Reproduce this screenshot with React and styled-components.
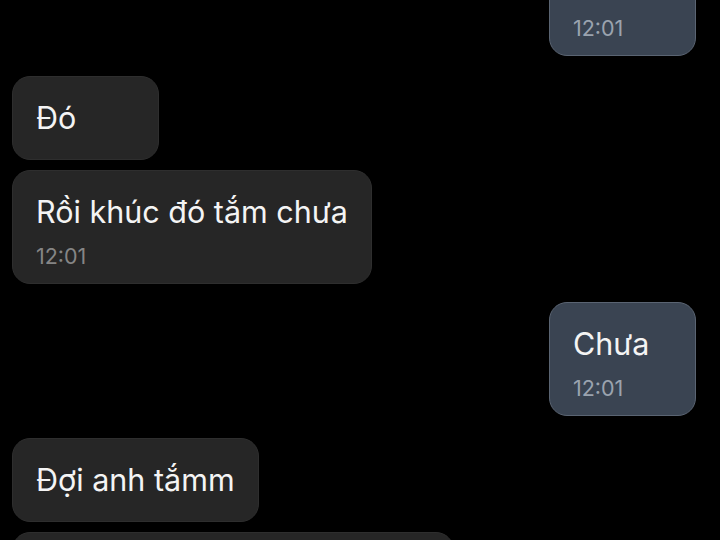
import styled, { createGlobalStyle } from 'styled-components';

const GlobalStyle = createGlobalStyle`
  html, body {
    margin: 0;
    padding: 0;
    background: #000;
    overflow: hidden;
  }
  body {
    font-family: Inter, "Noto Sans", "Liberation Sans", sans-serif;
  }
`;

const Screen = styled.div`
  width: 720px;
  height: 540px;
  background: #000;
  overflow: hidden;
`;

const Thread = styled.div`
  display: flex;
  flex-direction: column;
  padding: 0 24px 0 12px;
  margin-top: -58px;
`;

const Bubble = styled.div`
  align-self: ${p => (p.$mine ? 'flex-end' : 'flex-start')};
  box-sizing: border-box;
  min-width: 147px;
  margin-top: ${p => p.$gap}px;
  padding: 24px 23px ${p => (p.$hasTime ? 15 : 24)}px;
  border-radius: 18px;
  background: ${p => (p.$mine ? '#3a4452' : '#262626')};
  border: 1.5px solid ${p => (p.$mine ? '#5a6472' : '#2e2e2e')};
  color: #f4f4f4;
`;

const Text = styled.div`
  font-size: 30.5px;
  line-height: 34px;
  white-space: nowrap;
`;

const Time = styled.div`
  margin-top: 15px;
  font-size: 21.5px;
  line-height: 24px;
  color: ${p => (p.$mine ? '#9aa3af' : '#858585')};
`;

const messages = [
  { mine: true, text: 'Ừ', time: '12:01', gap: 0 },
  { mine: false, text: 'Đó', gap: 20 },
  { mine: false, text: 'Rồi khúc đó tắm chưa', time: '12:01', gap: 10 },
  { mine: true, text: 'Chưa', time: '12:01', gap: 18 },
  { mine: false, text: 'Đợi anh tắmm', gap: 22 },
  { mine: false, text: 'Rồi nhắn tin với em sau nha', time: '12:01', gap: 10 },
];

export default function App() {
  return (
    <Screen>
      <GlobalStyle />
      <Thread>
        {messages.map((m, i) => (
          <Bubble key={i} $mine={m.mine} $gap={m.gap} $hasTime={!!m.time}>
            <Text>{m.text}</Text>
            {m.time && <Time $mine={m.mine}>{m.time}</Time>}
          </Bubble>
        ))}
      </Thread>
    </Screen>
  );
}
